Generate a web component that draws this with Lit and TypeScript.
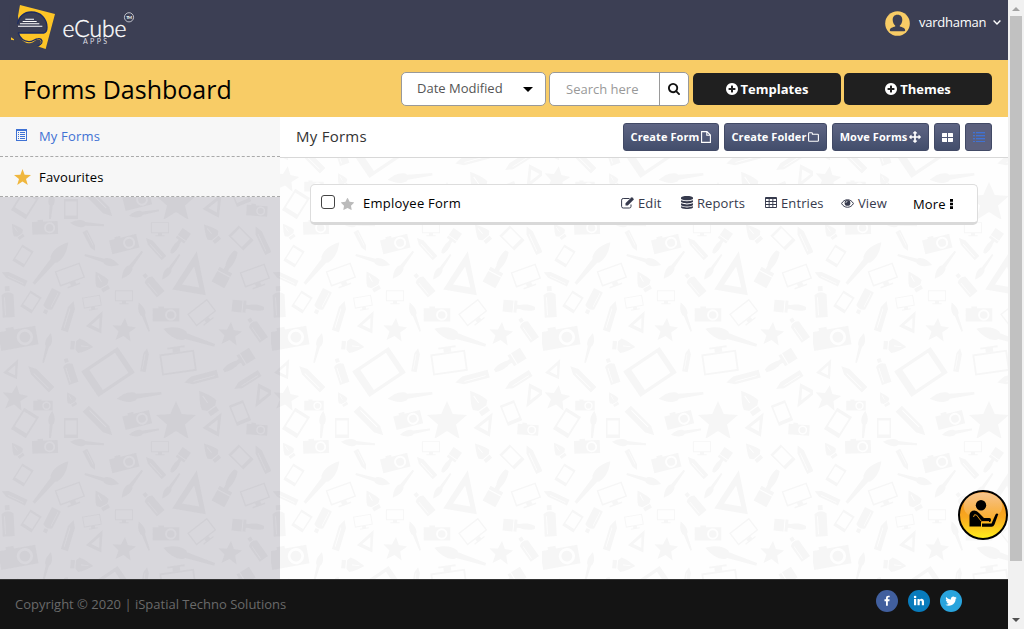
import { LitElement, html, css, svg, unsafeCSS } from "lit";
import { customElement, property } from "lit/decorators.js";

// ---- decorative stationery tile -------------------------------------------
const shapes: Record<string, string> = {
  pencil: "M-15-3.5H8L15 0L8 3.5H-15Z M-12-1.5V-.8H7V-1.5Z",
  brush: "M-18-1L2-2L3-3C8-5 13-3 18 0C13 3 8 5 3 3L2 2L-18 1Z",
  flat: "M-16-1.5C-10-4-3-3-1-2H2V-6H5V6H2V2H-1C-3 3-10 4-16 1.5Z M6-6H16V6H6Z",
  camera: "M-14-6H-8V-8H-2V-6H14V8H-14Z M5-5A6 6 0 1 0 5 7A6 6 0 1 0 5-5Z M5-3A4 4 0 1 1 5 5A4 4 0 1 1 5-3Z",
  monitor: "M-14-9H14V8H-14Z M-12.500-7.500V6.500H12.500V-7.500Z M-3 8H3V11H7V12.5H-7V11H-3Z",
  tablet: "M-7-10H7V10H-7Z M-5.5-7.5V6.5H5.5V-7.5Z",
  nib: "M0-11C3-6 6-2 7 3L4 6H-4L-7 3C-6-2-3-6 0-11Z M-4 7H4V11H-4Z M-.4-6V1H.4V-6Z",
  tri: "M0-20L15 18L-16 18Z M0-6L-8 12H8Z",
  spray: "M-5-7Q0-11 5-7V12H-5Z M-2-14H2V-10H-2Z M-3-5V10H-2.3V-5Z",
  star: "M0-10L2.9-3.5L10-3L4.5 1.7L6.3 9L0 5L-6.3 9L-4.5 1.7L-10-3L-2.9-3.5Z",
};
type Item = [string, number, number, number, number];
const items: Item[] = [
  ["nib", 17, 12, -35, 0.8], ["camera", 45, 8, -2, 0.92], ["brush", 87, 5, 184, 0.95], ["pencil", 90, 22, 63, 0.75],
  ["camera", 124, 24, -14, 1], ["monitor", 160, 9, 0, 0.65], ["pencil", 155, 29, 228, 0.9], ["flat", 179, 23, -55, 0.85],
  ["nib", 211, 14, -40, 1], ["tablet", 241, 19, -45, 1.05], ["pencil", 262, 21, 245, 1], ["tablet", 23, 37, 32, 0.95],
  ["pencil", 14, 59, 205, 0.9], ["brush", 51, 44, -50, 1.5], ["brush", 102, 41, 16, 1], ["brush", 132, 46, 127, 0.95],
  ["brush", 171, 48, 125, 0.85], ["monitor", 70, 56, -20, 0.95], ["nib", 101, 62, -30, 1], ["spray", 153, 66, -40, 1],
  ["tri", 193, 54, 10, 1.1], ["flat", 227, 49, 118, 1.2], ["monitor", 255, 57, -20, 0.95], ["spray", 8, 84, -3, 1.2],
  ["tablet", 31, 83, 33, 0.95], ["spray", 51, 82, 207, 1], ["pencil", 69, 97, -73, 1.05], ["monitor", 92, 83, -10, 0.65],
  ["monitor", 124, 77, 0, 0.65], ["brush", 144, 98, 250, 0.85], ["camera", 166, 95, 0, 0.95], ["tri", 98, 102, 25, 0.55],
  ["star", 124, 111, 5, 1.2], ["monitor", 202, 94, -38, 0.9], ["flat", 248, 88, 185, 1], ["star", 230, 115, 5, 1.2],
  ["spray", 257, 111, -35, 1], ["camera", 18, 118, -10, 1.35], ["brush", 47, 129, -75, 0.85], ["nib", 82, 127, 95, 1.05],
  ["brush", 189, 118, 198, 1.5], ["tablet", 108, 153, 56, 2.2], ["pencil", 145, 141, -80, 0.8], ["monitor", 178, 143, 172, 1.25],
  ["flat", 238, 143, -32, 1.05], ["tri", 14, 149, 25, 0.5], ["pencil", 40, 159, 225, 1.1], ["spray", 70, 153, -18, 1],
  ["pencil", 201, 159, 165, 1.15], ["pencil", 247, 162, 148, 1], ["star", 15, 179, 8, 1.3], ["camera", 43, 186, 0, 0.7],
  ["nib", 71, 180, -30, 0.7], ["brush", 139, 177, 173, 1.25], ["nib", 207, 183, -35, 1.25], ["tri", 261, 178, 208, 0.6],
  ["tablet", 25, 204, 32, 1.25], ["brush", 51, 207, -85, 0.85], ["tablet", 71, 209, 0, 1], ["pencil", 99, 203, 45, 1.25],
  ["camera", 137, 200, -14, 0.98], ["brush", 144, 213, 170, 0.85], ["star", 176, 202, 0, 2], ["tri", 216, 204, 28, 0.6],
  ["tablet", 240, 194, -22, 1.1], ["camera", 257, 210, 4, 0.75],
];
const tile =
  `<svg xmlns='http://www.w3.org/2000/svg' width='271' height='219'><g fill='#f6f6f6' fill-rule='evenodd'>` +
  items.map(([n, x, y, r, s]) => `<path transform='translate(${x} ${y}) rotate(${n === "flat" && r < 0 ? r : r}) scale(${s})' d='${shapes[n]}'/>`).join("") +
  `</g></svg>`;
const tileUrl = unsafeCSS(`url("data:image/svg+xml,${encodeURIComponent(tile)}")`);

// ---- icons -----------------------------------------------------------------
const glyphs = {
  search: { vb: "64 128 1664 1664", d: svg`<path d="M1216 832q0-185-131.5-316.5t-316.5-131.5-316.5 131.5-131.5 316.5 131.5 316.5 316.5 131.5 316.5-131.5 131.5-316.5zm512 832q0 52-38 90t-90 38q-54 0-90-38l-343-342q-179 124-399 124-143 0-273.5-55.5t-225-150-150-225-55.5-273.5 55.5-273.5 150-225 225-150 273.5-55.5 273.5 55.5 225 150 150 225 55.5 273.5q0 220-124 399l343 343q37 37 37 90z"/>` },
  plus: { vb: "128 128 1536 1536", d: svg`<path d="M1344 960v-128q0-26-19-45t-45-19h-256v-256q0-26-19-45t-45-19h-128q-26 0-45 19t-19 45v256h-256q-26 0-45 19t-19 45v128q0 26 19 45t45 19h256v256q0 26 19 45t45 19h128q26 0 45-19t19-45v-256h256q26 0 45-19t19-45zm320-64q0 209-103 385.5t-279.5 279.5-385.5 103-385.5-103-279.5-279.5-103-385.5 103-385.5 279.5-279.5 385.5-103 385.5 103 279.5 279.5 103 385.5z"/>` },
  star: { vb: "64 32 1664 1600", d: svg`<path d="M1728 647q0 22-26 48l-363 354 86 500q1 7 1 20 0 21-10.5 35.5t-30.5 14.5q-19 0-40-12l-449-236-449 236q-22 12-40 12-21 0-31.5-14.5t-10.5-35.5q0-6 2-20l86-500-364-354q-25-27-25-48 0-37 56-46l502-73 225-455q19-41 49-41t49 41l225 455 502 73q56 9 56 46z"/>` },
  sharpStar: { vb: "0 0 16 15", d: svg`<path d="M8 0L10 5.5L16 5.7L11.3 9.3L13 15L8 11.7L3 15L4.700 9.300L0 5.700L6 5.500Z"/>` },
  list: { vb: "0 0 11 12", d: svg`<path fill-rule="evenodd" d="M0 0H11V12H0ZM1 2V11H10V2ZM2 3H3V4H2ZM4 3H9V4H4ZM2 5H3V6H2ZM4 5H9V6H4ZM2 7H3V8H2ZM4 7H9V8H4ZM2 9H3V10H2ZM4 9H9V10H4Z"/>` },
  file: { vb: "0 0 10 12", d: svg`<path fill="none" stroke="currentColor" stroke-width="1.1" d="M.6.600H6L9.400 4V11.400H.6ZM5.800.800V4.200H9.200"/>` },
  folder: { vb: "0 0 11 10", d: svg`<path fill="none" stroke="currentColor" stroke-width="1.1" stroke-linejoin="round" d="M.6 1.600Q.6.800 1.400.800H3.600Q4.400.800 4.400 1.600V2.200H9.600Q10.400 2.200 10.400 3V8.400Q10.400 9.200 9.600 9.200H1.400Q.6 9.200.6 8.400Z"/>` },
  move: { vb: "0 0 1792 1792", d: svg`<path d="M1792 896q0 26-19 45l-256 256q-19 19-45 19t-45-19-19-45v-128h-384v384h128q26 0 45 19t19 45-19 45l-256 256q-19 19-45 19t-45-19l-256-256q-19-19-19-45t19-45 45-19h128v-384h-384v128q0 26-19 45t-45 19-45-19l-256-256q-19-19-19-45t19-45l256-256q19-19 45-19t45 19 19 45v128h384v-384h-128q-26 0-45-19t-19-45 19-45l256-256q19-19 45-19t45 19l256 256q19 19 19 45t-19 45-45 19h-128v384h384v-128q0-26 19-45t45-19 45 19l256 256q19 19 19 45z"/>` },
  grid: { vb: "0 0 11 9", d: svg`<path d="M.5 0H5V4H0V.5ZM6 0H10.500L11 .5V4H6ZM0 5H5V9H.5L0 8.500ZM6 5H11V8.500L10.500 9H6Z"/>` },
  rows: { vb: "0 0 12 10", d: svg`<path d="M0 0H2V1H0ZM3 0H12V1H3ZM0 3H2V4H0ZM3 3H12V4H3ZM0 6H2V7H0ZM3 6H12V7H3ZM0 9H2V10H0ZM3 9H12V10H3Z"/><path opacity=".35" d="M0 1H2V2H0ZM3 1H12V2H3ZM0 4H2V5H0ZM3 4H12V5H3ZM0 7H2V8H0ZM3 7H12V8H3Z"/>` },
  edit: { vb: "0 0 13 12", d: svg`<path fill="none" stroke="currentColor" stroke-width="1" d="M8.500 1.500H2.200Q.6 1.500.6 3.100V9.400Q.6 11 2.200 11H8.400Q10 11 10 9.400V7.500"/><path d="M4.500 6.200L10.300.400Q10.800 0 11.300.400L12.600 1.700Q13 2.200 12.600 2.700L6.800 8.500H4.500Z"/>` },
  database: { vb: "0 0 12 13", d: svg`<path d="M0 1.800C0-.6 12-.6 12 1.800V2.500C12 4.900 0 4.900 0 2.500ZM0 4.200Q6 6.400 12 4.200V5.600C12 8 0 8 0 5.600ZM0 7.300Q6 9.500 12 7.300V8.700C12 11.100 0 11.100 0 8.700ZM0 10.300Q6 12.500 12 10.300V11.300C12 13.600 0 13.600 0 11.300Z"/>` },
  table: { vb: "0 0 13 11", d: svg`<path fill-rule="evenodd" d="M1 0H12Q13 0 13 1V10Q13 11 12 11H1Q0 11 0 10V1Q0 0 1 0ZM1 2V4H4V2ZM5 2V4H8V2ZM9 2V4H12V2ZM1 5V7H4V5ZM5 5V7H8V5ZM9 5V7H12V5ZM1 8V10H4V8ZM5 8V10H8V8ZM9 8V10H12V8Z"/>` },
  eye: { vb: "0 0 13 9", d: svg`<path fill="none" stroke="currentColor" stroke-width="1" d="M.6 4.500C3-.5 10-.5 12.400 4.500C10 9.500 3 9.500.6 4.500Z"/><circle cx="6.500" cy="3.900" r="2.900"/><path fill="none" stroke="#fff" stroke-width=".7" d="M4.900 3.900Q4.900 2.300 6.500 2.300"/>` },
  dots: { vb: "0 0 3 11", d: svg`<path d="M0 0H3V3H0ZM0 4H3V7H0ZM0 8H3V11H0Z"/>` },
  chevron: { vb: "0 0 8 5", d: svg`<path fill="none" stroke="currentColor" stroke-width="1.400" d="M.6.600L4 4L7.400.600"/>` },
  caret: { vb: "0 0 10 5", d: svg`<path d="M0 0H10L5 5Z"/>` },
  facebook: { vb: "0 0 22 22", d: svg`<circle cx="11" cy="11" r="11" fill="#415f9e"/><path fill="#fff" transform="translate(5.600 5.700) scale(.006)" d="M1343 12v264h-157q-86 0-116 36t-30 108v189h293l-39 296h-254v759h-306v-759h-255v-296h255v-218q0-186 104-288.500t277-102.500q147 0 228 12z"/>` },
  linkedin: { vb: "0 0 22 22", d: svg`<circle cx="11" cy="11" r="11" fill="#087bbc"/><path fill="#fff" d="M6 9H8.200V15.300H6ZM9.500 9H11.600V9.900C12.800 8.200 16 8.500 16 11.500V15.300H13.800V11.900C13.800 10.200 11.700 10.300 11.700 11.900V15.300H9.500Z"/><circle cx="7.100" cy="7" r="1.300" fill="#fff"/>` },
  twitter: { vb: "0 0 22 22", d: svg`<circle cx="11" cy="11" r="11" fill="#29a4dd"/><path fill="#fff" transform="translate(4.600 4.700) scale(.0072)" d="M1684 408q-67 98-162 167 1 14 1 42 0 130-38 259.500t-115.500 248.500-184.500 210.500-258 146-323 54.500q-271 0-496-145 35 4 78 4 225 0 401-138-105-2-188-64.500t-114-159.500q33 5 61 5 43 0 85-11-112-23-185.500-111.500t-73.500-205.500v-4q68 38 146 41-66-44-105-115t-39-154q0-88 44-163 121 149 294.500 238.500t371.500 99.500q-8-38-8-74 0-134 94.500-228.500t228.500-94.500q140 0 236 102 109-21 205-78-37 115-142 178 93-10 186-50z"/>` },
  user: { vb: "0 0 26 26", d: svg`<circle cx="13" cy="13" r="12.800" fill="#f8cc66"/><path fill="#3c3f54" d="M13 4C16.500 4 18 6.200 18 9.300C18 12 16.500 14.400 15.400 15.200V16.200C18 17 21 17.600 21 20.200Q21 21 20 21H6Q5 21 5 20.200C5 17.600 8 17 10.600 16.200V15.200C9.500 14.400 8 12 8 9.300C8 6.200 9.500 4 13 4Z"/>` },
};
type GlyphName = keyof typeof glyphs;

@customElement("ui-icon")
class UiIcon extends LitElement {
  static styles = css`
    :host { display: inline-flex; flex: none; }
    svg { display: block; width: 100%; height: 100%; fill: currentColor; }
  `;
  @property() name: GlyphName = "star";
  render() {
    const g = glyphs[this.name];
    return html`<svg viewBox=${g.vb} preserveAspectRatio="none">${g.d}</svg>`;
  }
}

@customElement("app-root")
class AppRoot extends LitElement {
  static styles = css`
    :host { display: flex; width: 1024px; height: 629px; overflow: hidden; font: 13px/18px "Open Sans", sans-serif; color: #000; }
    * { box-sizing: border-box; }
    .page { width: 1008px; height: 629px; display: flex; flex-direction: column; background: #fefefe ${tileUrl} 0 0; }
    .top { height: 60px; background: #3c3f54; display: flex; justify-content: space-between; }
    .logo { width: 150px; height: 60px; }
    .user { display: flex; align-items: center; height: 46px; padding-right: 7px; color: #fff; }
    .user .name { width: 68px; margin: 0 6px 2px 9px; letter-spacing: -.25px; }
    .i-user { width: 25px; height: 25px; }
    .i-chevron { width: 8px; height: 5px; margin-top: -1px; }
    .bar { height: 57px; background: #f8cc66; display: flex; align-items: center; padding: 0 16px 0 23px; }
    .bar h1 { font-size: 25px; line-height: 34px; font-weight: 400; margin: 1px auto 0 0; }
    .select { width: 145px; height: 34px; border: 1px solid #999; border-radius: 5px; background: #fff; display: flex; align-items: center; justify-content: space-between; padding: 0 12px 2px 15px; color: #555; margin-right: 3px; }
    .i-caret { width: 10px; height: 5px; color: #000; margin-top: 3px; }
    .search { width: 140px; height: 34px; border: 1px solid #999; border-radius: 5px; background: #fff; display: flex; color: #999; margin-right: 4px; }
    .search .field { width: 110px; padding: 7px 0 0 16px; border-right: 1px solid #999; }
    .search .go { flex: 1; display: flex; align-items: center; justify-content: center; }
    .i-search { width: 12px; height: 12px; color: #111; margin-top: 1px; }
    .dark { width: 148px; height: 32px; border-radius: 5px; background: #202020; color: #fff; font-weight: 700; display: flex; align-items: center; justify-content: center; gap: 3px; margin-right: 3px; }
    .dark:last-child { margin-right: 0; }
    .i-plus { width: 12px; height: 12px; }
    .body { flex: 1; display: flex; min-height: 0; }
    .side { width: 280px; background: rgba(60, 54, 82, .195); }
    .side .item { height: 40px; border-bottom: 1px dashed #aaa; background: #f7f7f7; display: flex; align-items: center; padding-left: 14px; font-weight: 500; letter-spacing: .17px; }
    .side .item span { margin-left: 8px; }
    .side .active { color: #3f72d4; padding-left: 16px; padding-bottom: 2px; }
    .side .active span { margin-left: 12px; }
    .i-list { width: 11px; height: 12px; margin-top: -1px; }
    .i-sharpStar { width: 17px; height: 16px; color: #f0b73e; }
    .main { flex: 1; display: flex; flex-direction: column; }
    .tools { height: 41px; background: #fff; border-bottom: 1px solid #d8d8d8; display: flex; align-items: center; padding: 0 16px; gap: 5px; }
    .tools h2 { margin: 0 auto 2px 0; font-size: 15px; line-height: 20px; font-weight: 500; letter-spacing: .25px; color: #333; }
    .btn { height: 28px; border: 1px solid #424a66; border-radius: 3px; background: linear-gradient(#5e6584, #424d6b); color: #fff; font-weight: 700; font-size: 11px; letter-spacing: .08px; display: flex; align-items: center; justify-content: center; gap: 2px; }
    .create { width: 96px; } .folder { width: 103px; } .move { width: 97px; } .sq { width: 26px; }
    .on { width: 27px; background: #5b607d; color: #3f72d4; }
    .i-file { width: 10px; height: 12px; } .i-folder { width: 11px; height: 10px; } .i-move { width: 12px; height: 12px; }
    .i-grid { width: 11px; height: 9px; } .i-rows { width: 12px; height: 10px; }
    .card { margin: 26px 30px 0; height: 41px; background: #fff; border: 1px solid #ddd; border-bottom: 3px solid #d9d9d9; border-radius: 5px; display: flex; align-items: center; padding: 0 23px 0 10px; }
    .check { width: 14px; height: 14px; border: 1.5px solid #444; border-radius: 3px; margin: -4px 6px 0 0; }
    .i-star { width: 13px; height: 12px; color: #bbb; }
    .title { font-weight: 500; letter-spacing: .25px; margin: 0 auto 2px 9px; }
    .link { display: flex; align-items: center; gap: 4px; color: #363a4d; letter-spacing: .1px; margin-bottom: 2px; }
    .l-edit { width: 60px; } .l-reports { width: 84px; } .l-entries { width: 76px; } .l-view { width: 72px; }
    .more { width: 41px; color: #000; margin-bottom: 0; }
    .i-edit { width: 13px; height: 12px; } .i-database { width: 12px; height: 13px; } .i-table { width: 12px; height: 11px; } .i-eye { width: 13px; height: 9px; margin-top: 1px; } .i-dots { width: 3px; height: 10px; }
    .foot { height: 50px; background: #141414; border-top: 1px solid #333; color: #6a6a6a; display: flex; justify-content: space-between; align-items: center; padding: 0 46px 2px 15px; }
    .social { display: flex; gap: 10px; margin-top: -6px; }
    .i-soc { width: 22px; height: 22px; }
    .help { position: absolute; left: 957px; top: 489px; width: 52px; height: 52px; }
    .scroll { width: 16px; background: #f1f1f1; display: flex; flex-direction: column; align-items: center; }
    .arrow { width: 8px; height: 4px; margin: 7px 0 5px; display: block; }
    .thumb { width: 12px; height: 545px; background: #c1c1c1; }
    .down { margin: auto 0 7px; }
  `;

  private icon(name: GlyphName, cls = `i-${name}`) {
    return html`<ui-icon class=${cls} .name=${name}></ui-icon>`;
  }

  private logo() {
    return html`<svg class="logo" viewBox="0 0 150 60">
      <g transform="scale(.3333)">
        <path fill="#fdc526" d="M60 15L165 42L137 147L112 139L60 100L54 48Z" />
        <path fill="#fdc526" d="M56 98H132L128 126L100 136L66 130Z" />
        <path fill="#3c3f54" d="M30 44H52V76L56 102C62 116 70 128 86 130L120 128L118 139C104 142 80 146 60 136L30 108Z" />
        <path fill="#3c3f54" stroke="#1d2c63" stroke-width="4" d="M53 72C56 50 72 36 94 36C122 36 141 56 141 82C141 92 138 98 131 99H54" />
        <path fill="none" stroke="#1d2c63" stroke-width="4" stroke-linecap="round" d="M55 100C60 114 72 124 86 125C98 126 102 118 111 117C121 113 129 120 125 129Q122 134 114 137" />
        <path fill="#3c3f54" d="M92 129C100 128 105 120 112 119C120 117 125 123 122 129C118 136 104 139 92 138Z" />
        <path fill="#fdc526" d="M33 112L42 118V121L33 119Z" />
        <path stroke="#fff" stroke-width="3.200" d="M54 79H127M60 71.500H118M68 64.500H110M76 58H102" />
      </g>
      <text x="62.500" y="36.500" font-family="Lato, sans-serif" font-size="23.500" font-weight="300" textLength="64" lengthAdjust="spacingAndGlyphs" fill="#fff" stroke="#fff" stroke-width=".4">eCube</text>
      <text x="83" y="44" font-family="Lato, sans-serif" font-size="7" textLength="24" fill="#dcdde3">APPS</text>
      <circle cx="129" cy="17.300" r="4.600" fill="none" stroke="#dcdde3" stroke-width=".8" />
      <text x="126.200" y="19" font-family="Lato, sans-serif" font-size="4.200" font-weight="700" textLength="5.800" fill="#fff">TM</text>
    </svg>`;
  }

  private help() {
    return html`<svg class="help" viewBox="0 0 52 52">
      <defs><linearGradient id="g" x1="0" y1="0" x2="0" y2="1"><stop offset="0" stop-color="#f08c1c" /><stop offset=".55" stop-color="#f9a81f" /><stop offset="1" stop-color="#ffef1c" /></linearGradient>
      <linearGradient id="h" x1="0" y1="0" x2="0" y2="1"><stop offset="0" stop-color="#fff" stop-opacity=".5" /><stop offset="1" stop-color="#fff" stop-opacity=".05" /></linearGradient></defs>
      <circle cx="26" cy="26" r="24" fill="url(#g)" stroke="#000" stroke-width="2" />
      <ellipse cx="26" cy="17" rx="19.500" ry="13.500" fill="url(#h)" />
      <circle cx="24" cy="16.200" r="5.200" />
      <path d="M12.500 37.500V26Q13 21.500 17.500 21.500Q20 21.500 22 24L27 29H32.500Q34 29 34 31Q34 33 32.500 33H24V37.500Z" />
      <path fill="none" stroke="#f5a321" stroke-width=".9" d="M16.500 28Q17 24.500 19.500 26L24.500 32.500H32" />
      <path d="M25 34.500H34.500L38.500 25.500Q39.500 23.800 41.300 25L37.500 35.500Q36.500 37.800 34.500 37.800H25Z" />
    </svg>`;
  }

  render() {
    return html`
      <div class="page">
        <header class="top">${this.logo()}
          <div class="user">${this.icon("user")}<span class="name">vardhaman</span>${this.icon("chevron")}</div>
        </header>
        <div class="bar">
          <h1>Forms Dashboard</h1>
          <div class="select"><span>Date Modified</span>${this.icon("caret")}</div>
          <div class="search"><div class="field">Search here</div><div class="go">${this.icon("search")}</div></div>
          <div class="dark">${this.icon("plus")}<span>Templates</span></div>
          <div class="dark">${this.icon("plus")}<span>Themes</span></div>
        </div>
        <div class="body">
          <nav class="side">
            <div class="item active">${this.icon("list")}<span>My Forms</span></div>
            <div class="item">${this.icon("sharpStar")}<span>Favourites</span></div>
          </nav>
          <main class="main">
            <div class="tools">
              <h2>My Forms</h2>
              <div class="btn create">Create Form${this.icon("file")}</div>
              <div class="btn folder">Create Folder${this.icon("folder")}</div>
              <div class="btn move">Move Forms${this.icon("move")}</div>
              <div class="btn sq">${this.icon("grid")}</div>
              <div class="btn on">${this.icon("rows")}</div>
            </div>
            <div class="card">
              <span class="check"></span>${this.icon("star")}
              <span class="title">Employee Form</span>
              <span class="link l-edit">${this.icon("edit")}Edit</span>
              <span class="link l-reports">${this.icon("database")}Reports</span>
              <span class="link l-entries">${this.icon("table")}Entries</span>
              <span class="link l-view">${this.icon("eye")}View</span>
              <span class="link more">More${this.icon("dots")}</span>
            </div>
          </main>
        </div>
        <footer class="foot">
          <span>Copyright © 2020 | iSpatial Techno Solutions</span>
          <div class="social">${this.icon("facebook", "i-soc")}${this.icon("linkedin", "i-soc")}${this.icon("twitter", "i-soc")}</div>
        </footer>
      </div>
      <div class="scroll">
        <svg class="arrow" viewBox="0 0 8 4"><path d="M4 0L8 4H0Z" fill="#a3a3a3" /></svg>
        <div class="thumb"></div>
        <svg class="arrow down" viewBox="0 0 8 4"><path d="M0 0H8L4 4Z" fill="#505050" /></svg>
      </div>
      ${this.help()}
    `;
  }
}
